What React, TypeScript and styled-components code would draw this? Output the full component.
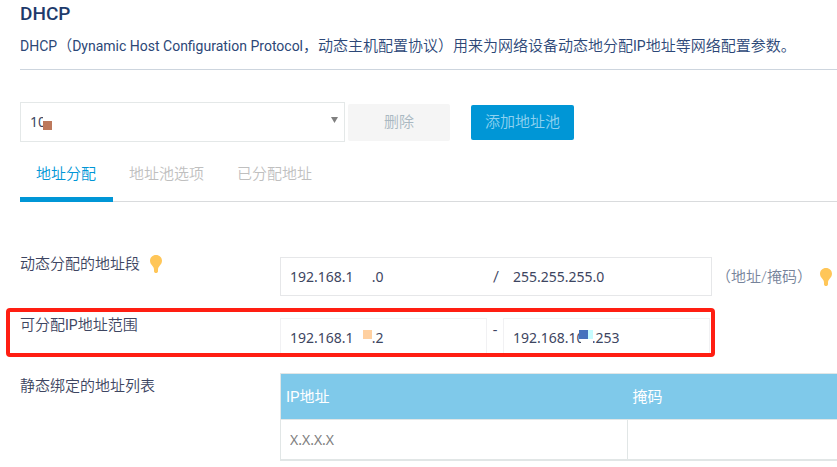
import React from "react";
import styled, { createGlobalStyle } from "styled-components";

const GlobalStyle = createGlobalStyle`
  *, *::before, *::after { box-sizing: border-box; }
  html, body { margin: 0; overflow: hidden; background: #ffffff; }
  body, button, input, select, table {
    font-family: Roboto, "Noto Sans CJK SC", sans-serif;
    font-size: 15px;
    font-weight: 350;
    line-height: 24px;
  }
`;

const Page = styled.main`
  padding: 2px 0 0 20px;
  color: #3d4561;
`;

const Latin = styled.span`
  font-size: 14px;
  font-weight: 400;
`;

const Header = styled.header`
  height: 68px;
  border-bottom: 1px solid #cdd5de;
  color: #1d3a6b;
`;

const Title = styled.h1`
  margin: 0 0 8px;
  font-size: 19px;
  font-weight: 500;
  line-height: 24px;
`;

const Description = styled.p`
  margin: 0;
  color: #2c4777;
  white-space: nowrap;
`;

const Toolbar = styled.div`
  display: flex;
  align-items: center;
  margin-top: 32px;
`;

const SelectBox = styled.div`
  position: relative;
  width: 325px;
`;

const PoolSelect = styled.select`
  display: block;
  width: 100%;
  height: 40px;
  padding: 0 30px 0 9px;
  appearance: none;
  background: #ffffff;
  border: 1px solid #e4e8e8;
  border-radius: 0;
  color: #3d4561;
  font-family: "Noto Sans", "Noto Sans CJK SC", sans-serif;
  font-size: 14px;
  font-weight: 400;
`;

const SelectArrow = styled.svg`
  position: absolute;
  top: 15px;
  right: 7px;
  pointer-events: none;
`;

const Button = styled.button<{ $primary?: boolean }>`
  width: ${(p) => (p.$primary ? 103 : 102)}px;
  height: ${(p) => (p.$primary ? 35 : 37)}px;
  margin-left: ${(p) => (p.$primary ? 21 : 3)}px;
  padding: 0;
  border: 0;
  border-radius: 2px;
  background: ${(p) => (p.$primary ? "#0096d6" : "#f5f5f5")};
  color: ${(p) => (p.$primary ? "#8fd2f0" : "#a9b8c1")};
`;

const Tabs = styled.nav`
  display: flex;
  margin-top: 14px;
  border-bottom: 1px solid #d9dbdd;
`;

const Tab = styled.button<{ $active?: boolean }>`
  height: 46px;
  margin-bottom: -1px;
  padding: 0 17px 6px 16px;
  border: 0;
  border-bottom: 5px solid ${(p) => (p.$active ? "#0096d6" : "transparent")};
  background: none;
  color: ${(p) => (p.$active ? "#0096d6" : "#bfbfbf")};
`;

const Form = styled.div`
  display: grid;
  grid-template-columns: 260px 1fr;
  row-gap: 22px;
  margin-top: 55px;
`;

const FieldLabel = styled.label`
  display: flex;
  align-items: center;
  height: 14px;
`;

const LabelWithTip = styled(FieldLabel)`
  gap: 10px;
`;

const FieldRow = styled.div`
  display: flex;
  align-items: center;
  height: 39px;
`;

const InputGroup = styled.div<{ $width: number; $faint?: boolean }>`
  position: relative;
  display: flex;
  align-items: center;
  width: ${(p) => p.$width}px;
  height: 39px;
  border: 1px solid ${(p) => (p.$faint ? "#f1f1f3" : "#e6e7e9")};
`;

const AddressInput = styled.input`
  flex: 1;
  min-width: 0;
  height: 37px;
  padding: 0 9px;
  border: 0;
  outline: 0;
  background: transparent;
  color: #3d4561;
  font-family: "Noto Sans", "Noto Sans CJK SC", sans-serif;
  font-size: 14px;
  font-weight: 400;
`;

const Separator = styled.span<{ $width: number }>`
  width: ${(p) => p.$width}px;
  text-align: center;
  font-weight: 400;
`;

const Dash = styled(Separator)`
  align-self: flex-start;
`;

const Hint = styled.span`
  margin: 0 8px 0 4px;
  color: #76839a;
  white-space: nowrap;
`;

const Mask = styled.i<{ $left: number; $top: number; $w: number; $h?: number; $color: string }>`
  position: absolute;
  left: ${(p) => p.$left}px;
  top: ${(p) => p.$top}px;
  width: ${(p) => p.$w}px;
  height: ${(p) => p.$h ?? 9}px;
  background: ${(p) => p.$color};
  pointer-events: none;
`;

const RangeLabelCell = styled.div`
  position: relative;
`;

const HighlightFrame = styled.div`
  position: absolute;
  top: -10px;
  left: -14px;
  z-index: 1;
  width: 709px;
  height: 49px;
  border: 4px solid #ff1e12;
  border-radius: 4px;
  pointer-events: none;
`;

const BindingTable = styled.table`
  width: 100%;
  margin-top: -6px;
  border-collapse: collapse;
  table-layout: fixed;
  border: 1px solid #e1e6e6;
  border-bottom-width: 2px;
  border-right: 0;
`;

const HeadCell = styled.th`
  height: 46px;
  padding: 0 5px;
  background: #7fc9ea;
  color: #ffffff;
  font-weight: 400;
  text-align: left;

  &:first-child { width: 347px; }
`;

const BodyCell = styled.td`
  height: 40px;
  padding: 0;
  border: 1px solid #e1e6e6;
  border-bottom: 2px solid #e1e6e6;
  border-right: 0;
`;

const CellInput = styled(AddressInput)`
  display: block;
  width: 100%;

  &::placeholder { color: #808080; opacity: 1; }
`;

const Bulb = () => (
  <svg width="12" height="18" viewBox="0 0 12 18" aria-hidden="true">
    <path
      d="M6 0C2.5 0 0 2.6 0 5.800c0 2.300 1.200 3.700 2.500 5.200C3.600 12.300 4 13.300 4 15v1.200C4 17.300 4.900 18 6 18s2-.7 2-1.800V15c0-1.700.4-2.700 1.500-4C10.800 9.500 12 8.100 12 5.800 12 2.600 9.500 0 6 0z"
      fill="#ffc658"
    />
  </svg>
);

const tabs = ["地址分配", "地址池选项", "已分配地址"];

export default function App() {
  return (
    <>
      <GlobalStyle />
      <Page>
        <Header>
          <Title>DHCP</Title>
          <Description>
            <Latin>DHCP</Latin>（<Latin>Dynamic Host Configuration Protocol</Latin>
            ，动态主机配置协议）用来为网络设备动态地分配<Latin>IP</Latin>地址等网络配置参数。
          </Description>
        </Header>

        <Toolbar>
          <SelectBox>
            <PoolSelect aria-label="地址池">
              <option>10</option>
            </PoolSelect>
            <Mask $left={23} $top={10} $w={9} $h={20} $color="#ffffff" />
            <Mask $left={23} $top={19} $w={9} $color="#bd795c" />
            <SelectArrow width="7" height="6" viewBox="0 0 7 6" aria-hidden="true">
              <path d="M0 0h7L3.500 6z" fill="#808080" />
            </SelectArrow>
          </SelectBox>
          <Button type="button">删除</Button>
          <Button type="button" $primary>添加地址池</Button>
        </Toolbar>

        <Tabs>
          {tabs.map((name, i) => (
            <Tab key={name} type="button" $active={i === 0}>{name}</Tab>
          ))}
        </Tabs>

        <Form>
          <LabelWithTip htmlFor="segment">动态分配的地址段<Bulb /></LabelWithTip>
          <FieldRow>
            <InputGroup $width={432}>
              <AddressInput id="segment" defaultValue="192.168.1     .0" />
              <Separator $width={16}>/</Separator>
              <AddressInput aria-label="掩码" defaultValue="255.255.255.0" />
            </InputGroup>
            <Hint>（地址/掩码）</Hint>
            <Bulb />
          </FieldRow>

          <RangeLabelCell>
            <FieldLabel htmlFor="range-start">可分配<Latin>IP</Latin>地址范围</FieldLabel>
            <HighlightFrame />
          </RangeLabelCell>
          <FieldRow>
            <InputGroup $width={207} $faint>
              <AddressInput id="range-start" defaultValue="192.168.1     .2" />
              <Mask $left={82} $top={11} $w={9} $color="#ffd0a0" />
            </InputGroup>
            <Dash $width={16}>-</Dash>
            <InputGroup $width={207} $faint>
              <AddressInput aria-label="结束地址" defaultValue="192.168.10  .253" />
              <Mask $left={77} $top={8} $w={12} $h={20} $color="#ffffff" />
              <Mask $left={75} $top={11} $w={9} $color="#4573bd" />
              <Mask $left={84} $top={11} $w={5} $color="#c7fcff" />
            </InputGroup>
          </FieldRow>

          <FieldLabel as="span" id="bindings">静态绑定的地址列表</FieldLabel>
          <BindingTable aria-labelledby="bindings">
            <thead>
              <tr>
                <HeadCell>IP地址</HeadCell>
                <HeadCell>掩码</HeadCell>
              </tr>
            </thead>
            <tbody>
              <tr>
                <BodyCell><CellInput aria-label="IP地址" placeholder="X.X.X.X" /></BodyCell>
                <BodyCell><CellInput aria-label="掩码" /></BodyCell>
              </tr>
            </tbody>
          </BindingTable>
        </Form>
      </Page>
    </>
  );
}
